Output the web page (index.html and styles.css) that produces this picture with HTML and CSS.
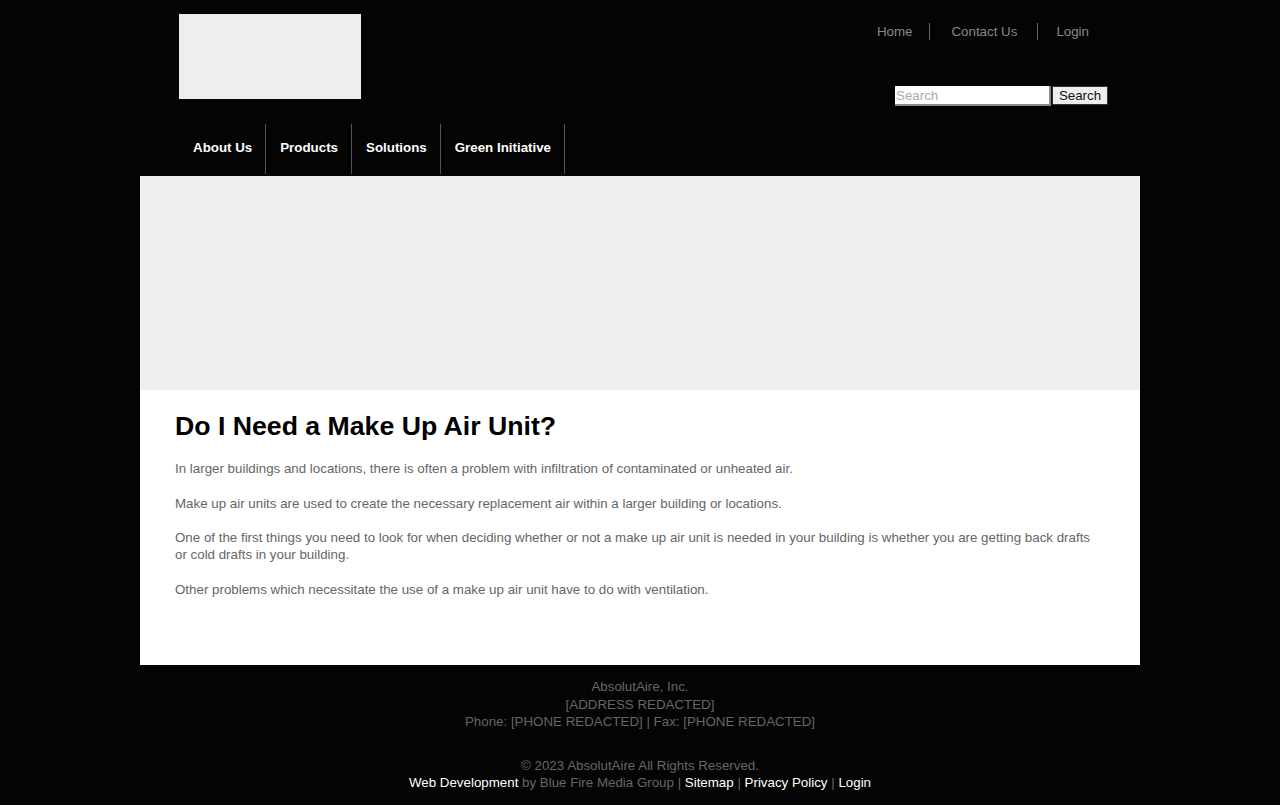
FILE: index.html
```html
<!DOCTYPE html>
<html lang="en">
<head>
<meta charset="utf-8">
<title>Do I Need a Make Up Air Unit? - AbsolutAire</title>
<link rel="stylesheet" href="styles.css">
</head>
<body>
<div class="page">
  <header class="header">
    <div class="header-top">
      <a class="logo" href="#"></a>
      <div class="header-right">
        <nav class="util-nav">
          <a href="#">Home</a>
          <a href="#">Contact Us</a>
          <a href="#">Login</a>
        </nav>
        <form class="search">
          <input class="search-input" type="text" placeholder="Search">
          <button class="search-btn" type="button">Search</button>
        </form>
      </div>
    </div>
    <nav class="main-nav">
      <a href="#">About Us</a>
      <a href="#">Products</a>
      <a href="#">Solutions</a>
      <a href="#">Green Initiative</a>
    </nav>
  </header>
  <div class="banner"></div>
  <main class="content">
    <h1>Do I Need a Make Up Air Unit?</h1>
    <p>In larger buildings and locations, there is often a problem with infiltration of contaminated or unheated air.</p>
    <p>Make up air units are used to create the necessary replacement air within a larger building or locations.</p>
    <p>One of the first things you need to look for when deciding whether or not a make up air unit is needed in your building is whether you are getting back drafts or cold drafts in your building.</p>
    <p>Other problems which necessitate the use of a make up air unit have to do with ventilation.</p>
  </main>
  <footer class="footer">
    <div class="footer-info">
      AbsolutAire, Inc.<br>
      [ADDRESS REDACTED]<br>
      Phone: [PHONE REDACTED] | Fax: [PHONE REDACTED]
    </div>
    <div class="footer-copy">
      © 2023 AbsolutAire All Rights Reserved.<br>
      <a href="#">Web Development</a> by Blue Fire Media Group | <a href="#">Sitemap</a> | <a href="#">Privacy Policy</a> | <a href="#">Login</a>
    </div>
  </footer>
</div>
</body>
</html>
```
FILE: styles.css
```css
html, body {
  margin: 0;
  padding: 0;
  background: #040404;
}
body {
  font-family: "Liberation Sans", Arial, sans-serif;
  font-size: 13.333px;
}
.page {
  width: 1000px;
  margin: 0 auto;
}
.header {
  padding: 14px 32px 0 39px;
}
.header-top {
  display: flex;
  justify-content: space-between;
  height: 110px;
}
.logo {
  display: block;
  width: 182px;
  height: 85px;
  background: #eeeeee;
}
.header-right {
  display: flex;
  flex-direction: column;
  align-items: flex-end;
}
.util-nav {
  display: flex;
  margin-top: 9px;
}
.util-nav a {
  color: #888888;
  text-decoration: none;
  line-height: 17px;
  padding: 0 20px 0 21px;
  border-left: 1px solid #666666;
}
.util-nav a:first-child {
  border-left: none;
  padding: 0 17px 0 19px;
}
.util-nav a:last-child {
  padding: 0 19px 0 18px;
}
.search {
  display: flex;
  margin: 46px 0 0;
  gap: 1px;
}
.search-input {
  box-sizing: border-box;
  width: 156px;
  height: 20px;
  margin: 0;
  padding: 0 1px;
  border: none;
  border-right: 2px solid #8a8a8a;
  border-bottom: 2px solid #8a8a8a;
  background: #ffffff;
  font-family: "Liberation Sans", Arial, sans-serif;
  font-size: 13.333px;
  color: #333;
}
.search-input::placeholder {
  color: #aaaaaa;
}
.search-btn {
  box-sizing: border-box;
  width: 56px;
  height: 19px;
  margin: 0;
  padding: 0;
  border: 1px solid #333;
  background: #eeeeee;
  font-family: "Liberation Sans", Arial, sans-serif;
  font-size: 13.333px;
  color: #111;
}
.main-nav {
  display: flex;
  height: 52px;
}
.main-nav a {
  display: flex;
  align-items: center;
  box-sizing: border-box;
  padding: 0 13px 4px 14px;
  color: #ffffff;
  font-weight: bold;
  text-decoration: none;
  border-right: 1px solid #555555;
  height: 50px;
}
.banner {
  height: 214px;
  background: #eeeeee;
}
.content {
  background: #ffffff;
  padding: 20px 35px 50px;
}
.content h1 {
  margin: 0 0 18px;
  font-size: 26.667px;
  line-height: 32px;
  color: #000000;
}
.content p {
  margin: 0 0 17.5px;
  line-height: 17px;
  color: #666666;
}
.footer {
  text-align: center;
  color: #666666;
  line-height: 17.5px;
  padding: 13px 0 14px;
}
.footer-copy {
  margin-top: 26px;
}
.footer a {
  color: #ffffff;
  text-decoration: none;
}
```
